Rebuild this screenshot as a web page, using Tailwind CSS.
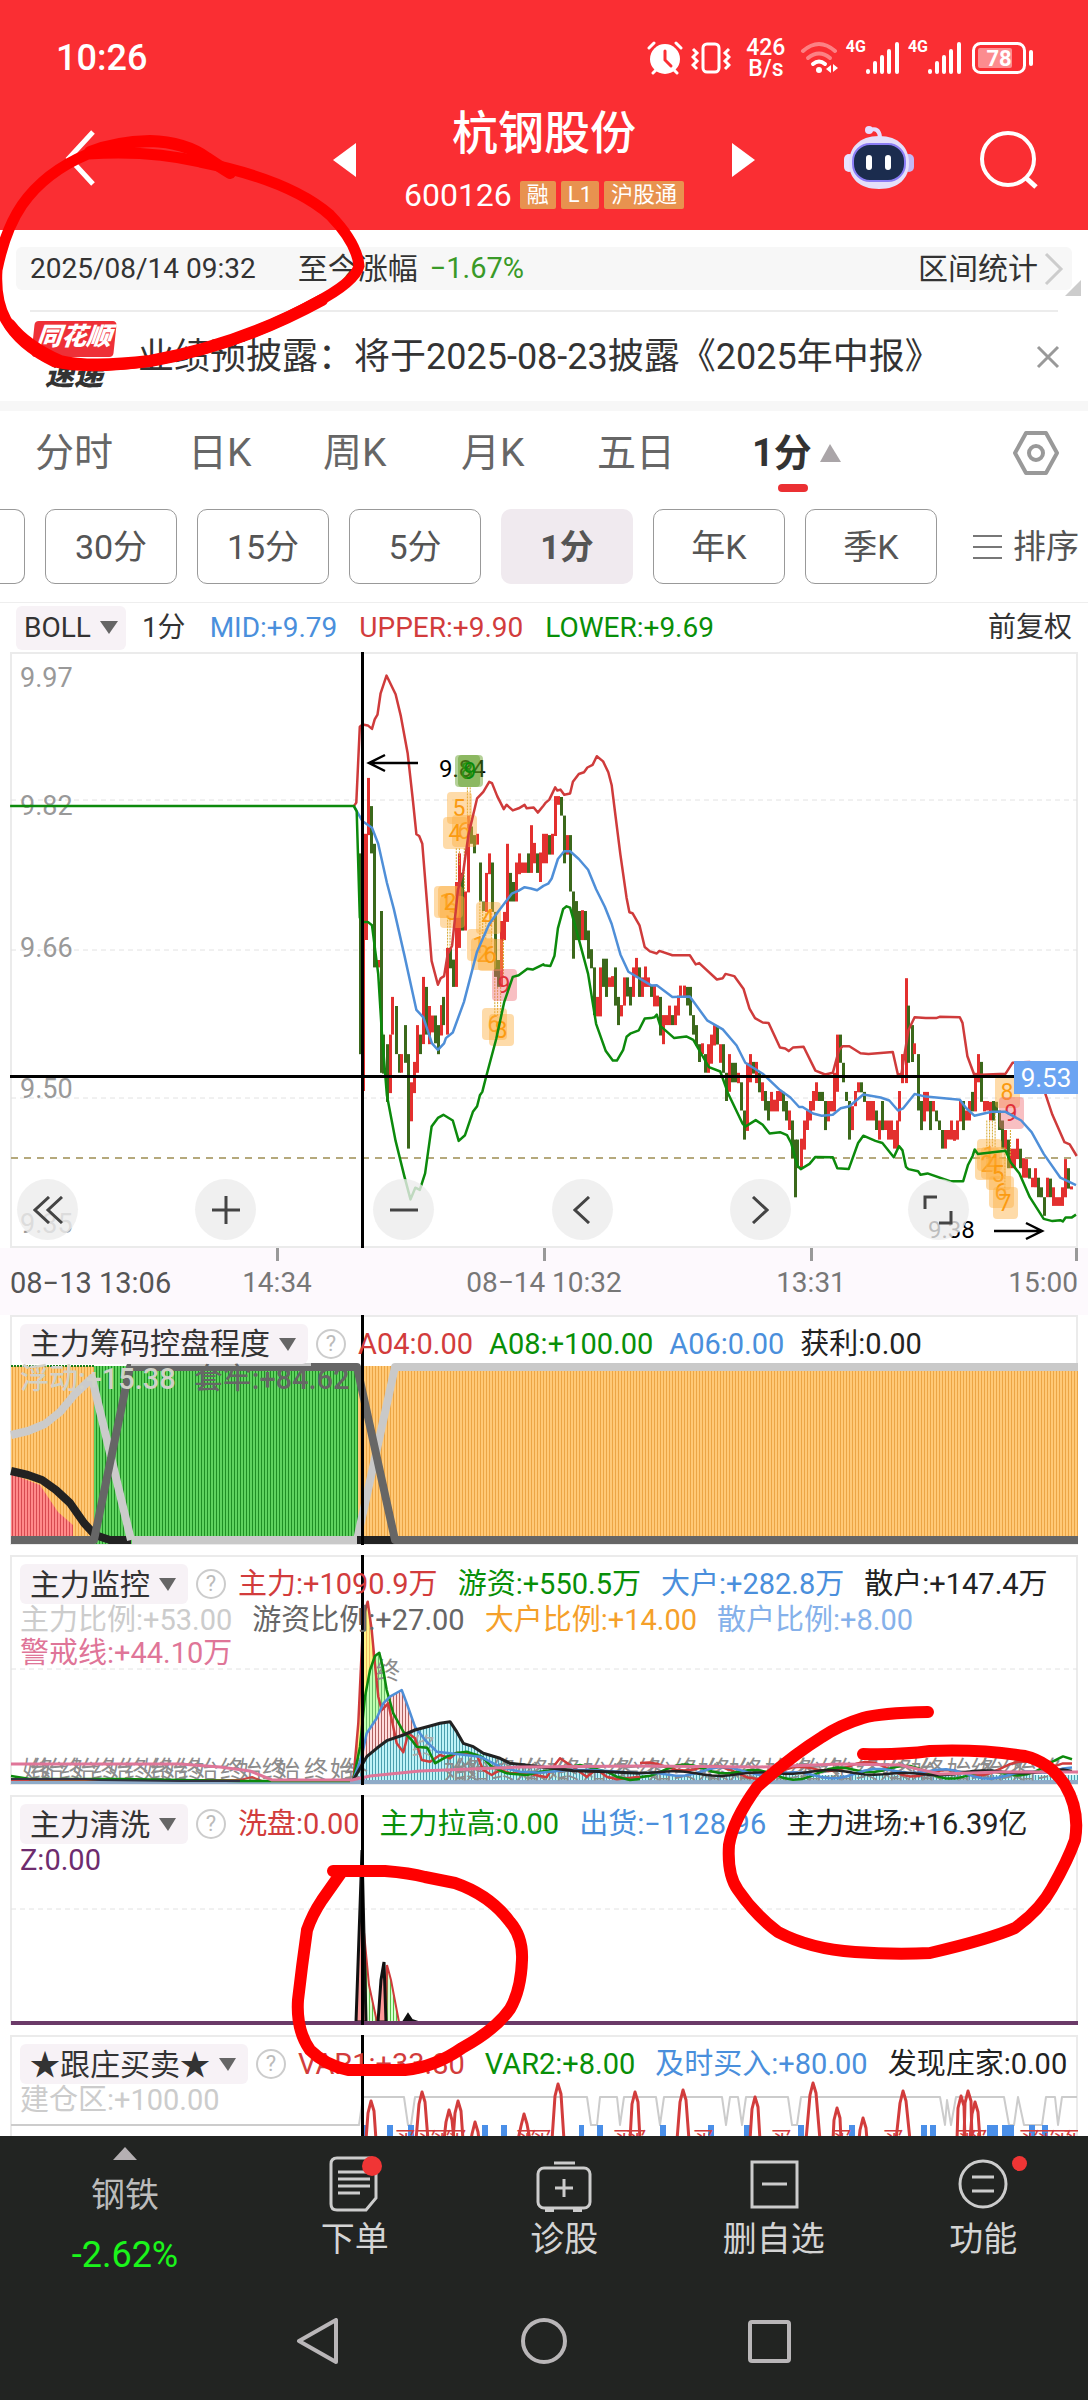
<!DOCTYPE html>
<html lang="zh-CN">
<head>
<meta charset="utf-8">
<meta name="viewport" content="width=device-width, initial-scale=1">
<title>杭钢股份 600126</title>
<script src="https://cdn.jsdelivr.net/npm/@tailwindcss/browser@4"></script>
</head>
<body class="bg-white font-[Roboto,'Noto_Sans_CJK_SC',sans-serif] text-[28px] leading-8 text-[#333]">
<div class="relative overflow-hidden">

<header class="bg-[#fa2e33] text-white h-[230px] flex flex-col">
  <div class="flex items-center justify-between pl-[56px] pr-[54px] pt-[36px] h-[80px]">
    <span class="text-[36px] leading-[44px] font-medium">10:26</span>
    <div class="flex items-center">
      <svg class="w-[36px] h-[36px]" viewBox="0 0 36 36" fill="none" stroke="#fff" stroke-linecap="round"><circle cx="18" cy="19" r="15" fill="#fff" stroke="none"/><path d="M2 8l5-5M34 8l-5-5M6 33l4-4M30 33l-4-4" stroke-width="3"/><path d="M18 11v9l6 6" stroke="#fa2e33" stroke-width="3"/></svg>
      <svg class="w-[40px] h-[36px] ml-[8px]" viewBox="0 0 40 36" fill="none" stroke="#fff" stroke-width="3"><rect x="12" y="4" width="16" height="28" rx="4"/><path d="M2 9l4 4-4 4 4 4-4 4 4 4M38 9l-4 4 4 4-4 4 4 4-4 4"/></svg>
      <span class="ml-[14px] w-[42px] text-center text-[23px] leading-[21px] font-medium">426<br>B/s</span>
      <svg class="w-[40px] h-[36px] ml-[13px]" viewBox="0 0 40 36" fill="none" stroke="#fff" stroke-width="4" stroke-linecap="round"><path d="M3 11q16-14 32 0" opacity=".4"/><path d="M8 18q11-9 22 0" opacity=".4"/><path d="M13 24q6-5 12 0"/><circle cx="19" cy="30" r="3" fill="#fff" stroke="none"/><path d="M31 25v8l-5-4zM33 24v8l5-4z" fill="#fff" stroke="none"/></svg>
      <span class="ml-[6px] self-start text-[16px] leading-5 font-bold">4G</span>
      <svg class="w-[34px] h-[34px]" viewBox="0 0 34 34" stroke="#fff" stroke-width="4" stroke-linecap="round"><path d="M2 31v-1M9 31v-9M16 31v-15M23 31v-21M31 31v-28"/></svg>
      <span class="ml-[8px] self-start text-[16px] leading-5 font-bold">4G</span>
      <svg class="w-[34px] h-[34px]" viewBox="0 0 34 34" stroke="#fff" stroke-width="4" stroke-linecap="round"><path d="M2 31v-1M9 31v-9M16 31v-15M23 31v-21M31 31v-28"/></svg>
      <svg class="w-[62px] h-[34px] ml-[10px]" viewBox="0 0 62 34"><rect x="1.500" y="2.500" width="51" height="29" rx="7" fill="none" stroke="#fff" stroke-width="3"/><rect x="6" y="7" width="34" height="20" rx="2" fill="#fff" opacity=".45"/><rect x="57" y="9" width="4" height="16" rx="2" fill="#fff"/><text x="27" y="25" text-anchor="middle" font-size="22" font-weight="700" fill="#fff">78</text></svg>
    </div>
  </div>
  <div class="grid grid-cols-[1fr_422px_1fr] h-[150px]">
    <button class="justify-self-start self-start ml-[62px] mt-[48px]" aria-label="返回"><svg class="w-[36px] h-[60px]" viewBox="0 0 36 60" fill="none" stroke="#fff" stroke-width="5"><path d="M31 4L7 30l24 26"/></svg></button>
    <div class="flex justify-between">
      <button class="self-start mt-[63px]" aria-label="上一只"><svg class="w-[23px] h-[34px]" viewBox="0 0 23 34"><path d="M23 0v34L0 17z" fill="#fff"/></svg></button>
      <div class="flex flex-col items-center">
        <h1 class="text-[46px] leading-[54px] mt-[26px] font-medium">杭钢股份</h1>
        <div class="flex items-center gap-[5px] mt-[19px] leading-[32px] text-[22px]"><span class="text-[32px] mr-[3px]">600126</span><span class="bg-[#e8924f] rounded-xs px-[7px] leading-7">融</span><span class="bg-[#e8924f] rounded-xs px-[7px] leading-7">L1</span><span class="bg-[#e8924f] rounded-xs px-[7px] leading-7">沪股通</span></div>
      </div>
      <button class="self-start mt-[63px]" aria-label="下一只"><svg class="w-[23px] h-[34px]" viewBox="0 0 23 34"><path d="M0 0v34l23-17z" fill="#fff"/></svg></button>
    </div>
    <div class="flex justify-end items-start pr-[50px] gap-[64px]">
      <button class="mt-[44px]" aria-label="智能助手"><svg class="w-[70px] h-[66px]" viewBox="0 0 70 66"><path d="M26 6q9-3 10 7" fill="none" stroke="#e6dcff" stroke-width="4"/><circle cx="25" cy="6" r="4" fill="#e6dcff"/><rect x="0" y="30" width="10" height="18" rx="5" fill="#e9e2ff"/><rect x="60" y="30" width="10" height="18" rx="5" fill="#c3b8f5"/><path d="M35 12c20 0 30 12 30 27s-10 26-30 26S5 54 5 39 15 12 35 12z" fill="#e4dffa"/><rect x="9" y="20" width="52" height="37" rx="17" fill="#1b2c4e" stroke="#8b7df5" stroke-width="2"/><rect x="22" y="31" width="6" height="15" rx="3" fill="#fff"/><rect x="41" y="31" width="6" height="15" rx="3" fill="#fff"/></svg></button>
      <button class="mt-[50px]" aria-label="搜索"><svg class="w-[60px] h-[60px]" viewBox="0 0 60 60" fill="none" stroke="#fff" stroke-width="4"><circle cx="30" cy="29" r="26"/><path d="M47 47l11 10" stroke-width="5"/></svg></button>
    </div>
  </div>
</header>

<div class="pt-[17px] px-4 relative">
  <div class="bg-[#f7f7f7] rounded-md h-[43px] flex items-center pl-[14px] pr-2 leading-[43px]">
    <span class="text-[28px]">2025/08/14 09:32</span>
    <span class="ml-[42px] text-[30px]">至今涨幅</span>
    <span class="ml-[12px] text-[29px] text-[#3a9a28]">−1.67%</span>
    <a href="#" class="ml-auto flex items-center text-[30px]">区间统计<svg class="w-[20px] h-[34px] ml-[6px]" viewBox="0 0 20 34" fill="none" stroke="#ccc" stroke-width="3"><path d="M2 2l15 15L2 32"/></svg></a>
  </div>
  <svg class="absolute right-[7px] bottom-[-6px] w-[16px] h-[16px]" viewBox="0 0 16 16"><path d="M16 0v16H0z" fill="#ccc"/></svg>
</div>
<div class="mt-[20px] mx-[30px] border-t-2 border-[#ececec] h-[91px] flex items-center">
  <div class="ml-[3px] w-[82px] italic font-black text-[25px] leading-[31px]"><div class="bg-[#ee3037] text-white rounded-sm text-center -skew-x-6 h-[36px]">同花顺</div><div class="text-[29px] leading-[36px] text-center text-[#333]">速递</div></div>
  <span class="ml-[23px] text-[36px] leading-[44px] whitespace-nowrap">业绩预披露：将于2025-08-23披露《2025年中报》</span>
  <button class="ml-auto -mr-[2px]" aria-label="关闭"><svg class="w-[24px] h-[24px]" viewBox="0 0 24 24" stroke="#999" stroke-width="3"><path d="M2 2l20 20M22 2L2 22"/></svg></button>
</div>
<div class="h-[10px] bg-[#f7f7f7]"></div>

<nav class="flex items-start h-[98px] pt-[17px] pl-[35px] pr-[29px] text-[39px] leading-[50px] text-[#666]">
  <a href="#" class="w-[153px]">分时</a><a href="#" class="w-[135px]">日K</a><a href="#" class="w-[138px]">周K</a><a href="#" class="w-[136px]">月K</a><a href="#" class="w-[155px]">五日</a>
  <a href="#" class="font-bold text-[#333] flex flex-col"><span class="flex items-center gap-[8px] text-[38px]">1分<svg class="w-[21px] h-[18px]" viewBox="0 0 21 18"><path d="M10 0l11 18H0z" fill="#aaa5a8"/></svg></span><span class="mt-[6px] ml-[26px] w-[30px] h-[8px] rounded bg-[#eb3033]"></span></a>
  <button class="ml-auto mt-[2px]" aria-label="设置"><svg class="w-[46px] h-[46px]" viewBox="0 0 46 46" fill="none" stroke="#999" stroke-width="4" stroke-linejoin="round"><path d="M13 3h20l11 20-11 20H13L2 23z"/><circle cx="23" cy="23" r="7"/></svg></button>
</nav>
<div class="flex items-center h-[75px] text-[34px] leading-[44px] text-[#555]">
  <span class="w-[25px] h-[75px] border border-l-0 border-[#999] rounded-r-[10px]"></span>
  <div class="flex-1 grid grid-cols-6 gap-5 ml-5 mr-[36px]">
    <button class="h-[75px] border border-[#999] rounded-[10px]">30分</button><button class="h-[75px] border border-[#999] rounded-[10px]">15分</button><button class="h-[75px] border border-[#999] rounded-[10px]">5分</button><button class="h-[75px] bg-[#f0eaef] rounded-[10px] font-bold">1分</button><button class="h-[75px] border border-[#999] rounded-[10px]">年K</button><button class="h-[75px] border border-[#999] rounded-[10px]">季K</button>
  </div>
  <button class="flex items-center gap-[11px] mr-[9px] text-[33px]"><svg class="w-[29px] h-[26px]" viewBox="0 0 29 26" stroke="#777" stroke-width="2"><path d="M0 2h29M0 13h29M0 24h29"/></svg>排序</button>
</div>

<div class="mt-[18px] border-t border-[#eee] flex items-center h-[50px] px-4 whitespace-nowrap">
  <button class="bg-[#f7f2f6] rounded-md h-[44px] px-2 flex items-center gap-[9px]">BOLL<svg class="w-[18px] h-[13px]" viewBox="0 0 18 13"><path d="M0 0h18L9 13z" fill="#666"/></svg></button>
  <span class="ml-[16px]">1分</span>
  <span class="ml-[24px] text-[#4a8fdc]">MID:+9.79</span>
  <span class="ml-[22px] text-[#d23c3c]">UPPER:+9.90</span>
  <span class="ml-[22px] text-[#088f08]">LOWER:+9.69</span>
  <span class="ml-auto">前复权</span>
</div>

<main>
  <section class="mx-[10px] grid">
    <svg id="kline" class="col-start-1 row-start-1 w-full h-auto block" viewBox="10 652 1068 596"></svg>
    <div class="col-start-1 row-start-1 flex items-end justify-between pl-[7px] pr-[109px] pb-[8px]">
      <button class="size-[61px] rounded-full bg-[#ececec]/80 grid place-items-center" aria-label="收起"><svg class="w-[30px] h-[28px]" viewBox="0 0 30 28" fill="none" stroke="#444" stroke-width="3"><path d="M16 1L2 14l14 13M29 1L15 14l14 13"/></svg></button>
      <button class="size-[61px] rounded-full bg-[#ececec]/80 grid place-items-center" aria-label="放大"><svg class="w-[28px] h-[28px]" viewBox="0 0 28 28" stroke="#444" stroke-width="3"><path d="M0 14h28M14 0v28"/></svg></button>
      <button class="size-[61px] rounded-full bg-[#ececec]/80 grid place-items-center" aria-label="缩小"><svg class="w-[28px] h-[28px]" viewBox="0 0 28 28" stroke="#444" stroke-width="3"><path d="M0 14h28"/></svg></button>
      <button class="size-[61px] rounded-full bg-[#ececec]/80 grid place-items-center" aria-label="左移"><svg class="w-[18px] h-[28px]" viewBox="0 0 18 28" fill="none" stroke="#444" stroke-width="3"><path d="M16 1L2 14l14 13"/></svg></button>
      <button class="size-[61px] rounded-full bg-[#ececec]/80 grid place-items-center" aria-label="右移"><svg class="w-[18px] h-[28px]" viewBox="0 0 18 28" fill="none" stroke="#444" stroke-width="3"><path d="M2 1l14 13L2 27"/></svg></button>
      <button class="size-[61px] rounded-full bg-[#ececec]/80 grid place-items-center" aria-label="全屏"><svg class="w-[30px] h-[30px]" viewBox="0 0 30 30" fill="none" stroke="#444" stroke-width="3"><path d="M2 14V2h12M28 16v12H16"/></svg></button>
    </div>
  </section>
  <div class="bg-[#fdf9fd] px-[10px]">
    <div class="grid grid-cols-[minmax(0,1fr)_minmax(0,2fr)_minmax(0,2fr)_minmax(0,2fr)_minmax(0,1fr)] h-[67px] whitespace-nowrap text-[#777]">
      <span class="pt-[19px] text-[29px] text-[#555]">08−13 13:06</span>
      <span class="flex flex-col items-center gap-[6px]"><i class="w-[3px] h-[13px] bg-[#999]"></i>14:34</span>
      <span class="flex flex-col items-center gap-[6px]"><i class="w-[3px] h-[13px] bg-[#999]"></i>08−14 10:32</span>
      <span class="flex flex-col items-center gap-[6px]"><i class="w-[3px] h-[13px] bg-[#999]"></i>13:31</span>
      <span class="flex flex-col items-end gap-[6px]"><i class="w-[3px] h-[13px] bg-[#999]"></i>15:00</span>
    </div>
  </div>

  <section class="mx-[10px] grid">
    <svg id="chips" class="col-start-1 row-start-1 w-full h-auto block" viewBox="10 1315 1068 240"></svg>
    <div class="col-start-1 row-start-1 pt-[9px] pl-[10px] whitespace-nowrap text-[29px]">
      <div class="flex items-center h-[40px]">
        <button class="bg-[#f7f2f6] rounded-md h-[40px] pl-[10px] pr-[12px] flex items-center gap-[9px] text-[30px] mr-2">主力筹码控盘程度<svg class="w-[17px] h-[13px]" viewBox="0 0 17 13"><path d="M0 0h17l-8 13z" fill="#666"/></svg></button>
        <span class="size-[30px] rounded-full border-2 border-[#ccc] text-[#bbb] text-[22px] leading-[26px] text-center mr-3">?</span>
        <div class="flex gap-[16px]"><span class="text-[#d23c3c]">A04:0.00</span><span class="text-[#088f08]">A08:+100.00</span><span class="text-[#4a8fdc]">A06:0.00</span><span class="text-[#222]">获利:0.00</span></div>
      </div>
      <div class="flex gap-[18px] leading-[30px] font-medium"><span class="text-[#d0d0c8]">浮动:+15.38</span><span class="text-[#666]">套牢:+84.62</span></div>
    </div>
  </section>

  <section class="mx-[10px] grid">
    <svg id="monitor" class="col-start-1 row-start-1 w-full h-auto block" viewBox="10 1555 1068 240"></svg>
    <div class="col-start-1 row-start-1 pt-[9px] pl-[10px] whitespace-nowrap text-[29px] leading-[33px]">
      <div class="flex items-center h-[40px]">
        <button class="bg-[#f7f2f6] rounded-md h-[40px] pl-[10px] pr-[12px] flex items-center gap-[9px] text-[30px] mr-2">主力监控<svg class="w-[17px] h-[13px]" viewBox="0 0 17 13"><path d="M0 0h17l-8 13z" fill="#666"/></svg></button>
        <span class="size-[30px] rounded-full border-2 border-[#ccc] text-[#bbb] text-[22px] leading-[26px] text-center mr-3">?</span>
        <div class="flex gap-[20px]"><span class="text-[#d23c3c]">主力:+1090.9万</span><span class="text-[#088f08]">游资:+550.5万</span><span class="text-[#4a8fdc]">大户:+282.8万</span><span class="text-[#222]">散户:+147.4万</span></div>
      </div>
      <div class="flex gap-[20px]"><span class="text-[#ccc]">主力比例:+53.00</span><span class="text-[#666]">游资比例:+27.00</span><span class="text-[#f5a02a]">大户比例:+14.00</span><span class="text-[#86b1ea]">散户比例:+8.00</span></div>
      <div class="text-[#df7598]">警戒线:+44.10万</div>
    </div>
  </section>

  <section class="mx-[10px] grid">
    <svg id="wash" class="col-start-1 row-start-1 w-full h-auto block" viewBox="10 1795 1068 240"></svg>
    <div class="col-start-1 row-start-1 pt-[9px] pl-[10px] whitespace-nowrap text-[29px] leading-[33px]">
      <div class="flex items-center h-[40px]">
        <button class="bg-[#f7f2f6] rounded-md h-[40px] pl-[10px] pr-[12px] flex items-center gap-[9px] text-[30px] mr-2">主力清洗<svg class="w-[17px] h-[13px]" viewBox="0 0 17 13"><path d="M0 0h17l-8 13z" fill="#666"/></svg></button>
        <span class="size-[30px] rounded-full border-2 border-[#ccc] text-[#bbb] text-[22px] leading-[26px] text-center mr-3">?</span>
        <div class="flex gap-[20px]"><span class="text-[#d23c3c]">洗盘:0.00</span><span class="text-[#088f08]">主力拉高:0.00</span><span class="text-[#4a8fdc]">出货:−1128.96</span><span class="text-[#222]">主力进场:+16.39亿</span></div>
      </div>
      <div class="text-[#6e2c6e]">Z:0.00</div>
    </div>
  </section>

  <section class="mx-[10px] grid">
    <svg id="trade" class="col-start-1 row-start-1 w-full h-auto block" viewBox="10 2035 1068 101"></svg>
    <div class="col-start-1 row-start-1 pt-[9px] pl-[10px] whitespace-nowrap text-[29px] leading-[33px]">
      <div class="flex items-center h-[40px]">
        <button class="bg-[#f7f2f6] rounded-md h-[40px] pl-[10px] pr-[12px] flex items-center gap-[9px] text-[30px] mr-2">★跟庄买卖★<svg class="w-[17px] h-[13px]" viewBox="0 0 17 13"><path d="M0 0h17l-8 13z" fill="#666"/></svg></button>
        <span class="size-[30px] rounded-full border-2 border-[#ccc] text-[#bbb] text-[22px] leading-[26px] text-center mr-3">?</span>
        <div class="flex gap-[20px]"><span class="text-[#d23c3c]">VAR1:+33.80</span><span class="text-[#088f08]">VAR2:+8.00</span><span class="text-[#4a8fdc]">及时买入:+80.00</span><span class="text-[#222]">发现庄家:0.00</span></div>
      </div>
      <div class="text-[#ccc]">建仓区:+100.00</div>
    </div>
  </section>
</main>

<footer class="bg-[#222422] text-[#d4d4d4] h-[264px]">
  <div class="grid grid-cols-[250px_repeat(4,1fr)] h-[160px] text-[34px] leading-[40px]">
    <button class="flex flex-col items-center pt-[11px]"><svg class="w-[24px] h-[13px]" viewBox="0 0 24 13"><path d="M12 0l12 13H0z" fill="#b5b0b3"/></svg><span class="mt-[15px] text-[#bbb]">钢铁</span><span class="mt-[20px] text-[36px] text-[#1bf51b]">-2.62%</span></button>
    <button class="flex flex-col items-center pt-[20px]"><svg class="w-[56px] h-[56px]" viewBox="0 0 56 56" fill="none" stroke="#ccc" stroke-width="3"><path d="M10 2h32q7 0 7 7v33L39 54H10q-6 0-6-6V8q0-6 6-6z"/><path d="M11 16h32M11 23h32M11 30h32M11 37h22"/><circle cx="45" cy="10" r="10" fill="#f03535" stroke="none"/></svg><span class="mt-[7px]">下单</span></button>
    <button class="flex flex-col items-center pt-[20px]"><svg class="w-[56px] h-[56px]" viewBox="0 0 56 56" fill="none" stroke="#ccc" stroke-width="3"><rect x="2" y="12" width="52" height="40" rx="6"/><path d="M18 7h21M28 23v18M19 32h18"/><path d="M9 54h9M37 54h9" stroke-width="4"/></svg><span class="mt-[7px]">诊股</span></button>
    <button class="flex flex-col items-center pt-[20px]"><svg class="w-[56px] h-[56px]" viewBox="0 0 56 56" fill="none" stroke="#ccc" stroke-width="3"><rect x="6" y="6" width="45" height="45"/><path d="M16 28h25"/></svg><span class="mt-[7px]">删自选</span></button>
    <button class="flex flex-col items-center pt-[20px]"><span class="relative"><svg class="w-[56px] h-[56px]" viewBox="0 0 56 56" fill="none" stroke="#ccc" stroke-width="3"><circle cx="28" cy="28" r="23"/><path d="M17 21h22M17 35h22"/></svg><i class="absolute -right-[16px] top-0 size-[15px] rounded-full bg-[#f03535]"></i></span><span class="mt-[7px]">功能</span></button>
  </div>
  <div class="flex justify-center gap-[180px] pt-[22px]">
    <button aria-label="返回"><svg class="size-[46px]" viewBox="0 0 46 46" fill="none" stroke="#b9b6b8" stroke-width="4" stroke-linejoin="round"><path d="M41 2v42L4 23z"/></svg></button>
    <button aria-label="主页"><svg class="size-[46px]" viewBox="0 0 46 46" fill="none" stroke="#b9b6b8" stroke-width="4"><circle cx="23" cy="23" r="21"/></svg></button>
    <button aria-label="最近任务"><svg class="size-[46px]" viewBox="0 0 46 46" fill="none" stroke="#b9b6b8" stroke-width="4"><rect x="3" y="4" width="39" height="39" rx="2"/></svg></button>
  </div>
</footer>

<!-- hand-drawn highlight circles -->
<svg class="absolute inset-x-0 top-0 w-full h-auto pointer-events-none" viewBox="0 0 1088 2400" fill="none" stroke="#f00" stroke-linecap="round" stroke-linejoin="round">
  <path stroke-width="12" d="M90 152Q115 142 150 141Q185 142 207 158Q222 168 230 173"/>
  <path stroke-width="11" d="M88 154Q150 150 200 162Q290 180 330 215Q357 243 359 266Q355 282 315 303Q240 345 150 361Q90 370 55 362Q20 345 6 320Q-5 300-3 270Q5 230 22 205Q45 172 88 154"/>
  <path stroke-width="12" d="M322 300Q240 345 150 361Q90 368 60 361Q25 345 10 325"/>
  <path stroke-width="12" d="M928 1712Q880 1713 863 1718Q840 1725 822 1737Q790 1757 757 1787Q733 1820 729 1845Q727 1875 738 1890Q755 1915 778 1932Q810 1949 855 1952Q895 1955 930 1953Q990 1939 1015 1928Q1040 1910 1052 1888Q1068 1860 1075 1840Q1080 1810 1065 1785Q1050 1762 1025 1756Q980 1749 930 1751Q900 1755 863 1754"/>
  <path stroke-width="12" d="M333 1871L385 1871Q410 1873 425 1877L455 1883Q490 1895 510 1922Q523 1937 522 1960Q521 1990 510 2009Q495 2030 462 2048Q435 2067 405 2070L348 2070Q325 2065 310 2050Q296 2030 298 2000Q302 1965 307 1930Q312 1915 322 1900L341 1873"/>
</svg>
</div>

<script>
const $ = id => document.getElementById(id);
// Chart space: x in 2.882 units per px, y scaled per panel from its own origin.
const KX = 2.882;
const map = (s, oy, ky) => s.trim().split(/\s+/).map(p => { const [x, y] = p.split(',').map(Number); return [(x / KX).toFixed(1), (oy + y / ky).toFixed(1)]; });
const shift = s => s.trim().split(/\s+/).map(p => { const [x, y] = p.split(','); return (+x + 1568) + ',' + y; }).join(' ');
const line = (pts, c, w = 2.5, extra = '') => `<polyline points="${pts.map(p => p.join()).join(' ')}" fill="none" stroke="${c}" stroke-width="${w}" stroke-linejoin="round" ${extra}/>`;
const rect = (x, y, w, h, f, e = '') => `<rect x="${x}" y="${y}" width="${w}" height="${h}" fill="${f}" ${e}/>`;
const frame = (y, h) => `<rect x="11" y="${y + 1}" width="1066" height="${h - 2}" fill="none" stroke="#ebebeb" stroke-width="2"/>`;
const dash = (y, c = '#e2e2e2', w = 1, d = '5 4') => `<path d="M11 ${y}H1077" stroke="${c}" stroke-width="${w}" stroke-dasharray="${d}"/>`;
const cross = (y, h) => rect(361, y, 3, h, '#000');
const text = (x, y, s, c, n, e = '') => `<text x="${x}" y="${y}" fill="${c}" font-size="${n}" ${e}>${s}</text>`;

// ---- K line ----
const U = '1020,383 1027,375 1037,200 1045,195 1060,197 1072,205 1080,183 1088,172 1097,123 1114,82 1122,95 1140,125 1155,175 1175,262 1190,370 1200,448 1208,452 1217,470 1230,600 1244,740 1262,795 1270,780 1280,775 1290,725 1303,705 1320,575 1335,535 1350,450 1375,365 1393,350 1410,327 1418,330 1433,360 1452,390 1460,380 1478,393 1495,388 1512,380 1518,388 1538,386 1550,398 1566,382 ' + shift('5,375 15,368 32,340 38,347 47,345 58,357 75,354 83,327 100,309 115,305 125,294 140,288 152,268 170,280 185,305 195,335 205,400 220,495 238,595 246,628 255,630 275,658 290,708 305,718 325,723 332,717 370,727 420,727 437,748 447,745 498,783 515,780 523,770 548,775 575,805 592,850 608,872 630,882 647,883 680,940 695,942 705,948 717,940 748,938 782,993 810,1002 832,998 850,945 860,937 880,937 912,953 935,955 1005,950 1020,1003 1030,1000 1050,900 1068,870 1100,872 1130,872 1140,869 1198,870 1206,883 1220,960 1240,1003 1330,1000 1350,975 1400,973 1410,980 1425,1015 1440,1035 1465,1095 1500,1158 1515,1163 1535,1190');
const M = '1020,383 1045,418 1072,433 1090,470 1115,560 1135,620 1165,725 1200,853 1220,870 1245,930 1262,945 1280,930 1285,918 1305,905 1337,835 1375,718 1410,655 1435,627 1475,585 1495,578 1512,570 1530,573 1548,577 1566,567 ' + shift('12,562 22,550 40,505 58,487 75,487 100,505 127,530 150,575 175,615 195,655 220,725 243,765 310,797 325,796 370,823 420,822 470,877 515,898 555,935 580,975 630,1000 680,1038 710,1055 735,1077 745,1077 775,1092 800,1097 832,1095 855,1080 880,1075 920,1048 970,1055 995,1062 1020,1085 1035,1080 1068,1047 1100,1053 1198,1060 1215,1078 1240,1097 1290,1088 1330,1088 1375,1108 1405,1135 1440,1185 1488,1240 1533,1257');
const L = '29,383 1020,383 1028,395 1037,640 1045,650 1060,650 1072,658 1090,770 1100,900 1115,1050 1140,1155 1165,1235 1183,1290 1197,1263 1210,1268 1225,1230 1244,1122 1262,1102 1278,1095 1305,1108 1322,1155 1340,1142 1363,1088 1375,1075 1383,1050 1390,1042 1400,1010 1430,920 1453,835 1478,777 1495,773 1520,758 1535,760 1566,748 ' + shift('0,750 18,752 30,728 40,665 55,620 65,614 75,617 100,690 127,770 150,885 178,948 198,970 210,970 228,945 238,915 250,907 273,900 290,873 308,872 318,870 325,864 335,890 375,918 410,914 430,922 450,950 475,985 508,995 530,1045 572,1115 580,1122 610,1107 630,1118 650,1138 680,1135 700,1142 712,1160 730,1212 740,1220 765,1208 782,1192 832,1193 845,1218 878,1220 905,1160 920,1143 955,1155 975,1160 1008,1193 1023,1167 1033,1177 1043,1215 1050,1220 1078,1225 1085,1233 1105,1230 1170,1248 1208,1248 1222,1210 1235,1190 1241,1175 1250,1185 1330,1178 1345,1205 1370,1230 1400,1285 1440,1335 1465,1340 1488,1338 1495,1341 1503,1332 1520,1332 1533,1325');
const C1 = 'g1037,492,955 r1045,447,1040 r1054,447,692 r1062,318,450 g1070,383,492 g1079,470,755 r1088,738,755 g1097,625,998 g1105,910,1000 g1114,932,1065 r1123,910,1045 r1131,823,910 g1140,844,955 g1149,955,998 r1157,955,998 g1166,888,975 g1175,955,1173 r1184,1020,1110 r1192,973,1045 r1201,888,998 g1209,910,955 r1218,777,932 g1227,800,910 r1235,844,932 r1244,866,905 g1253,866,930 g1261,888,955 r1270,842,912 g1278,823,888 r1287,710,910 g1296,710,757 g1305,737,800 r1313,558,800 r1322,492,710 g1331,537,670 r1339,580,670 r1348,405,582 g1357,430,470 g1365,450,492 r1374,447,472 g1383,513,603 g1391,603,625 r1400,537,627 r1408,492,540 g1417,513,627 g1426,627,777 g1434,738,800 r1443,648,800 r1452,627,692 r1460,470,650 g1469,537,603 g1478,558,603 r1486,513,603 r1495,492,540 r1504,513,537 r1512,513,537 g1521,492,537 r1529,427,537 r1538,468,515 g1547,492,537 r1556,490,558 r1564,447,515';
const C2 = 'r5,447,515 g13,450,495 r22,447,495 r31,360,452 r39,360,380 g48,362,405 g57,405,515 r66,450,495 g74,450,580 g83,580,735 g91,602,692 g100,625,692 r108,623,692 g117,625,692 g126,670,735 g134,713,757 g143,755,865 r152,823,868 r161,755,868 g169,735,800 g178,735,823 r187,778,800 r195,775,800 g204,755,843 g213,823,888 r221,842,868 r230,778,843 g239,778,822 g247,800,843 r255,755,823 r264,733,778 g273,755,823 r281,778,823 r290,753,800 r299,778,800 g307,797,823 r316,797,845 r325,820,845 g333,823,912 r342,865,932 r351,865,888 r360,843,888 g368,865,888 r377,843,888 r385,820,866 r393,797,823 r402,797,823 g412,800,843 g421,800,866 g430,865,910 g438,888,935 g447,932,973 r456,930,955 g464,955,998 r473,932,998 r481,910,977 r490,888,935 g499,890,933 r508,932,975 g516,932,998 g524,998,1063 r532,955,1042 g541,975,1020 g549,975,1020 r558,998,1022 g567,1020,1085 g575,1085,1152 r584,975,1132 r593,955,1020 g601,973,1000 r610,973,1022 g619,998,1043 r628,1020,1063 g636,1040,1085 g645,1063,1108 r653,1042,1087 r662,1060,1087 r671,1040,1087 r680,1040,1063 g688,1042,1087 g697,1063,1108 r705,1085,1130 g714,1108,1195 g722,1152,1285 g730,1152,1218 r740,1150,1218 r749,1108,1175 r757,1085,1130 r766,1063,1108 r775,1040,1085 r783,1020,1063 g792,1042,1063 g800,1042,1063 g809,1063,1130 r818,1063,1110 r827,1063,1087 r835,998,1087 r843,910,1042 g852,910,975 g861,975,1020 g870,1042,1063 g878,1063,1152 r887,1075,1130 r896,1040,1075 r904,1020,1043 g912,1020,1043 g921,1042,1065 r930,1063,1108 r939,1063,1108 r948,1063,1108 g956,1085,1130 r965,1108,1152 g973,1063,1130 r982,1108,1130 r991,1108,1152 r999,1108,1152 r1008,1130,1173 r1016,1108,1173 r1024,1040,1110 r1033,955,1022 r1042,780,1022 g1050,843,975 g1059,888,973 r1067,930,955 g1077,955,1085 g1086,1063,1130 r1095,1042,1110 r1103,1042,1087 g1112,1063,1130 r1120,1063,1087 g1129,1085,1110 g1138,1108,1130 g1147,1130,1173 r1155,1130,1173 r1164,1130,1152 r1173,1108,1152 r1181,1130,1155 r1190,1108,1152 r1198,1063,1110 g1207,1063,1130 r1216,1085,1108 r1224,1063,1108 g1233,1042,1087 r1242,998,1087 r1250,955,1020 g1259,973,1065 r1268,1063,1087 r1276,1063,1085 r1285,1065,1108 g1293,1063,1108 g1302,1065,1088 g1311,1085,1130 g1319,1108,1173 r1328,1130,1175 g1337,1152,1218 r1345,1173,1218 r1354,1173,1218 r1362,1150,1197 g1371,1173,1218 r1380,1195,1240 r1388,1197,1240 g1397,1218,1242 r1405,1240,1262 r1414,1218,1262 g1423,1240,1285 g1431,1262,1285 g1440,1285,1328 r1449,1240,1285 g1457,1242,1285 r1466,1262,1305 r1475,1285,1305 r1483,1285,1305 r1492,1262,1305 r1500,1197,1285 g1509,1218,1265 r1518,1260,1267';
const candles = (s, off) => s.split(' ').map(c => { const [x, t, b] = c.slice(1).split(',').map(Number); return rect(Math.round((x + off) / KX) - 1, (640 + t / 2.306).toFixed(1), 3, ((b - t) / 2.306).toFixed(1), c[0] === 'r' ? '#e3302f' : '#3b681b'); }).join('');
const marks = [[1345,302,8,'g'],[1354,302,9,'g'],[1322,388,5],[1336,440,6],[1312,445,4],[1302,628,3],[1284,605,1],[1298,605,2],[1405,640,4],[1380,703,1],[1393,725,2],[1413,727,6],[1452,795,9,'p'],[1425,885,6],[1443,900,8],[2903,1043,8],[2913,1090,9,'p'],[2850,1188,1],[2845,1208,2],[2862,1205,4],[2876,1232,5],[2886,1272,6],[2896,1298,7]];
const stems = [[1290,645,710],[1297,645,710],[1315,480,555],[1324,480,520],[1338,480,580],[1347,340,405],[1355,340,430],[1383,600,690],[1391,625,690],[1400,630,690],[1417,630,700],[1426,780,870],[1434,800,870],[1443,800,870],[1451,690,780],[2844,1108,1170],[2852,1108,1170],[2860,1108,1170],[2868,1090,1170],[2896,1170,1270],[2912,1130,1190]];
let k = frame(652, 596) + dash(800) + dash(950) + dash(1098);
k += dash(1158, '#b5a97c', 2, '7 6');
k += [['9.97', 687], ['9.82', 815], ['9.66', 957], ['9.50', 1098], ['9.35', 1233]].map(([s, y]) => text(20, y, s, '#999', 27)).join('');
k += candles(C1, 0) + candles(C2, 1568);
k += stems.map(([x, a, b]) => `<path d="M${(x / KX).toFixed(1)} ${(640 + a / 2.306).toFixed(1)}V${(640 + b / 2.306).toFixed(1)}" stroke="#d3a52a" stroke-dasharray="2 1"/>`).join('');
k += text(439, 777, '9.84', '#000', 24) + text(928, 1238, '9.38', '#000', 24);
k += marks.map(([x, y, n, t]) => { const px = Math.round(x / KX), py = Math.round(640 + y / 2.306), c = t === 'g' ? ['#5a9a1c', '#0a8a0a'] : t === 'p' ? ['#f07078', '#e03038'] : ['#fdb040', '#fb9a10']; return rect(px - 12, py - 16, 25, 32, c[0], `rx="4" opacity=".45"`) + text(px, py + 8, n, c[1], 23, 'text-anchor="middle"'); }).join('');
k += line(map(U, 640, 2.306), '#cf3b3b') + line(map(M, 640, 2.306), '#4f8fd8') + line(map(L, 640, 2.306), '#0c8a0c');
k += `<path d="M418 763H369M385 755L369 763L385 771M994 1231H1042M1026 1223L1042 1231L1026 1239" fill="none" stroke="#000" stroke-width="2.500"/>`;
k += cross(652, 596) + rect(10, 1075, 1005, 3, '#000') + rect(1014, 1061, 64, 33, '#6ba4f2') + text(1046, 1087, '9.53', '#fff', 26, 'text-anchor="middle"');
$('kline').innerHTML = k;

// ---- chip distribution ----
const stripes = (id, a, b) => `<pattern id="${id}" width="3" height="8" patternUnits="userSpaceOnUse"><rect width="3" height="8" fill="${a}"/><rect width="1" height="8" fill="${b}"/></pattern>`;
let c = '<defs>' + stripes('or', '#ffc977', '#eca545') + stripes('gr', '#5fd35f', '#1f8f24') + stripes('rd', '#ff8a8a', '#d84a50') + '</defs>' + frame(1315, 230);
c += rect(11, 1366, 83, 178, 'url(#or)') + rect(94, 1366, 264, 178, 'url(#gr)') + rect(358, 1366, 720, 178, 'url(#or)');
c += `<path d="M11 1544V1474L40 1485L58 1512L73 1525V1544z" fill="url(#rd)"/>`;
c += `<path d="M11 1366H94M131 1366H357" stroke="#1c7f1c" stroke-width="2" stroke-dasharray="2 1"/>`;
c += line([[11,1471],[28,1475],[42,1480],[56,1490],[70,1503],[84,1523],[95,1535],[110,1540],[131,1540]], '#222', 8);
c += line([[132,1540],[357,1540],[395,1367],[1078,1367]], '#c9c9c9', 8);
c += line([[11,1435],[28,1431],[45,1424],[60,1412],[75,1394],[92,1378],[131,1540]], '#cbcbcb', 8);
c += line([[357,1540],[396,1540]], '#222', 8);
c += line([[11,1540],[94,1540],[130,1367],[357,1367],[395,1540],[1078,1540]], '#666', 8);
c += rect(131, 1363, 180, 3, '#c9c9c9') + cross(1315, 230);
$('chips').innerHTML = c;

// ---- fund monitor ----
const q = s => s.trim().split(/\s+/).map(p => { const [x, y] = p.split(',').map(Number); return [(340 + x / 3).toFixed(1), (1580 + y / 3).toFixed(1)]; });
const area = (pts, f) => `<polygon points="${[[pts[0][0], 1782], ...pts, [pts[pts.length - 1][0], 1782]].map(p => p.join()).join(' ')}" fill="${f}"/>`;
const red = q('40,600 55,430 70,110 83,65 95,150 105,255 115,350 125,390 145,370 170,490 190,517 205,460 225,475 245,540 270,545 300,525 330,535 350,518 410,525 430,570 455,585 480,570 510,580 560,580 620,592 640,560 660,535 690,555 740,590 770,568 800,590 830,598 860,595 900,590');
const grn = q('40,600 60,500 75,350 90,270 105,228 118,218 128,260 140,330 160,400 190,455 215,480 230,500 262,503 285,550 320,530 345,520 380,515 425,530 455,560 500,580 560,585 600,575 640,570 720,555 800,575 830,590 870,600 900,597');
const blu = q('40,600 65,530 80,460 110,415 130,370 150,350 185,330 200,370 225,440 255,480 290,515 350,522 420,530 480,560 540,575 600,578 680,570 760,570 900,580');
const blk = q('40,600 80,530 110,505 140,482 190,465 225,450 270,438 300,430 330,425 350,455 370,490 400,500 430,520 480,535 510,550 600,560 700,572 800,575 900,580');
const fills = '<defs>' + stripes('cy', '#bff3f7', '#4b9fae') + stripes('lr', '#ffdcdc', '#b06060') + stripes('lg', '#c0ffb0', '#68b868') + stripes('ly', '#fff58a', '#f0b860') + '</defs>';
let m = fills + frame(1555, 230) + dash(1669) + area(red.slice(0, 9), 'url(#ly)') + area(grn.slice(0, 12), 'url(#lg)') + area(blu.slice(0, 11), 'url(#lr)') + area(blk, 'url(#cy)');
m += rect(640, 1775, 438, 8, 'url(#cy)') + rect(11, 1780, 1067, 4, '#8fabc8');
const tags = [22,30,40,60,72,92,108,124,142,150,164,178,194,220,238,262,276,304,330,344];
for (let x = 444; x < 1050; x += [22, 10, 24, 12, 26, 9, 20][x % 7]) tags.push(x);
m += tags.map((x, i) => text(x, 1778, i % 2 ? '终' : '始', '#8c8c8c', 24)).join('') + text(376, 1679, '终', '#8c8c8c', 24) + text(412, 1755, '终', '#aaa', 24);
const wave = (seed, base, amp) => { const a = []; for (let x = 640; x <= 1077; x += 9) a.push([x, (base + amp * Math.sin(x / 17 + seed) * Math.sin(x / 41 + seed * 2) - amp * Math.exp(-((x - 1066) ** 2) / 200)).toFixed(1)]); return a; };
m += line([[11,1780],[240,1780],[252,1777],[262,1781],[354,1780]], '#c44', 2) + line([[11,1776],[30,1779],[120,1779],[240,1781],[350,1781]], '#0c8a0c');
m += line(red, '#cf3b3b') + line(grn, '#0c8a0c') + line(blu, '#4f8fd8') + line(blk, '#222', 3);
m += line(wave(1, 1770, 9), '#cf3b3b') + line(wave(2, 1772, 8), '#0c8a0c') + line(wave(3, 1773, 6), '#4f8fd8') + line(wave(0, 1773, 3), '#222', 2.5);
m += line([[11,1779],[85,1779],[100,1780],[180,1781],[240,1781]], '#334', 2);
m += line([[11,1764],[180,1764],[220,1767],[250,1771],[272,1780],[352,1780],[370,1776],[420,1771],[520,1767],[640,1766],[760,1767],[840,1764],[900,1765],[940,1774],[1000,1772],[1078,1772]], '#df7598', 3);
m += cross(1555, 230);
$('monitor').innerHTML = m;

// ---- wash ----
let w = '<defs>' + stripes('wg', '#d8ffd0', '#55c044') + '</defs>' + frame(1795, 230) + dash(1909);
w += `<path d="M364 2022V1932L369 1985L377 2022zM386 2022L387 1965L391 1980L399 2022z" fill="url(#wg)" stroke="#cf3b3b" stroke-width="2"/><path d="M356 2022L362 1850L366 2022zM378 2022L381 1980L384 1962L386 2022z" fill="#f99" stroke="#111" stroke-width="3"/><path d="M403 2022L408 2014L412 2020L418 2022" fill="#111" stroke="#111" stroke-width="2"/>`;
w += rect(11, 2021, 1067, 4, '#6b3a68') + cross(1795, 230);
$('wash').innerHTML = w;

// ---- trade ----
let t = frame(2035, 130) + line([[11,2125],[359,2125],[363,2097],[404,2097],[408,2125],[411,2125],[415,2097],[587,2097],[591,2125],[597,2125],[600,2097],[617,2097],[620,2125],[624,2097],[656,2097],[660,2125],[664,2097],[722,2097],[726,2125],[730,2097],[738,2097],[742,2125],[746,2097],[788,2097],[792,2125],[797,2125],[801,2097],[940,2097],[945,2125],[947,2100],[951,2125],[956,2097],[1004,2097],[1009,2125],[1014,2125],[1018,2097],[1024,2125],[1042,2125],[1046,2097],[1055,2097],[1058,2125],[1062,2097],[1077,2097]], '#ccc', 2);
[[361,6],[387,6],[408,6],[482,6],[501,6],[579,5],[597,6],[660,6],[708,6],[744,6],[798,6],[849,6],[921,6],[930,6],[987,11],[1002,12],[1029,6],[1042,6]].forEach(([x, n]) => t += rect(x, 2125, n, 12, '#4a8fe8'));
for (const x of [394,415,430,445,515,530,612,625,692,770,830,882,955,966,1018,1034,1050,1062]) t += text(x, 2147, '买', '#d23c3c', 22);
[[371,2101,5],[422,2092,6],[449,2110,5],[458,2101,5],[475,2122,4],[524,2114,6],[558,2084,6],[635,2092,5],[683,2090,6],[755,2097,5],[813,2083,7],[837,2108,4],[863,2118,4],[903,2091,7],[961,2096,4],[968,2091,4],[975,2102,5]].forEach(([x, y, h]) => t += line([[x - h, 2140], [x - 3, y + 12], [x, y], [x + 3, y + 10], [x + h, 2140]], '#d23c3c', 3));
t += cross(2035, 101);
$('trade').innerHTML = t;
</script>
</body>
</html>
